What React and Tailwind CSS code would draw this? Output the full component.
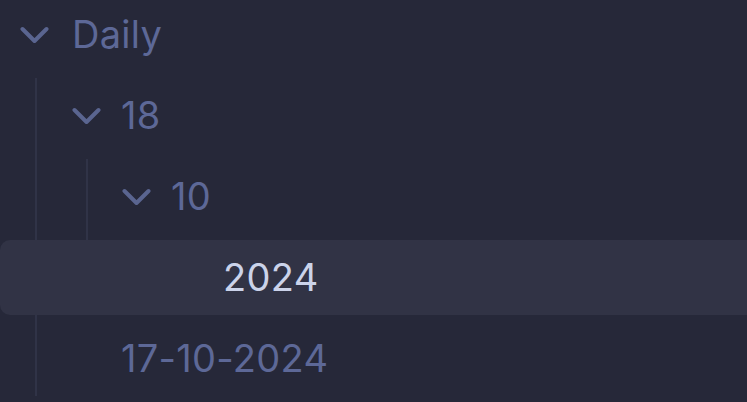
import React from 'react';

const Chevron = () => (
  <svg width="30" height="18" viewBox="0 0 30 18" className="shrink-0 text-[#5a6590]">
    <polyline points="2.5,3 14.5,15 26.5,3" fill="none" stroke="currentColor" strokeWidth="4" strokeLinecap="round" strokeLinejoin="round" />
  </svg>
);

const Row = ({ children, className = '' }) => (
  <div className={`flex items-center h-[75px] mb-[6px] ${className}`}>{children}</div>
);

export default function App() {
  return (
    <div
      className="w-[747px] h-[402px] overflow-hidden bg-[#262839] text-[38px] leading-none text-[#5d6897] tracking-[0.3px]"
      style={{ fontFamily: 'Inter, "Noto Sans", sans-serif' }}
    >
      <div className="-mt-[3px]">
        <Row className="pl-[20px]">
          <Chevron />
          <span className="ml-[22px] pb-[2px]">Daily</span>
        </Row>
        <div className="ml-[35px] border-l-2 border-[#303347]">
          <Row className="pl-[35px]">
            <Chevron />
            <span className="ml-[19px] pb-[2px]">18</span>
          </Row>
          <div className="ml-[49px] border-l-2 border-[#303347]">
            <Row className="pl-[34px]">
              <Chevron />
              <span className="ml-[19px] pb-[2px]">10</span>
            </Row>
            <div className="ml-[49px] border-l-2 border-[#303347]">
              <Row className="-ml-[139px] -mr-[30px] rounded-[10px] bg-[#313345] pl-[223px]">
                <span className="pb-[2px] text-[#cbd3ea]">2024</span>
              </Row>
            </div>
          </div>
          <Row className="pl-[84px]">
            <span className="pb-[2px]">17-10-2024</span>
          </Row>
        </div>
      </div>
    </div>
  );
}
